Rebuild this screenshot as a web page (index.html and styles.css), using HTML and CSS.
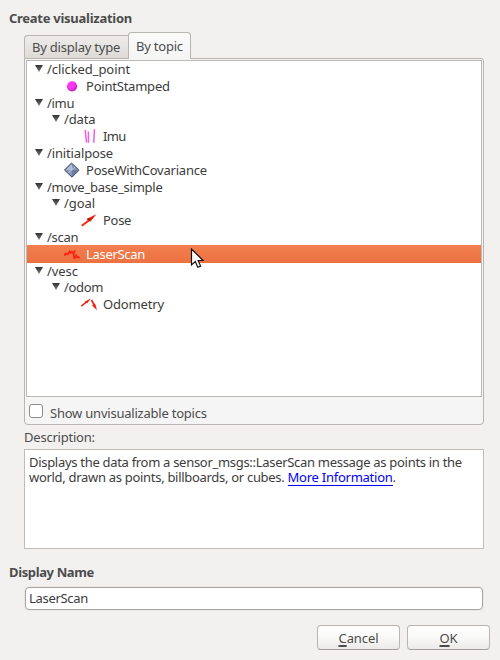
FILE: index.html
```
<!DOCTYPE html>
<html lang="en">
<head>
<meta charset="utf-8">
<title>Create visualization</title>
<link rel="stylesheet" href="styles.css">
</head>
<body>
<main class="dialog">
  <h2 class="heading">Create visualization</h2>
  <div class="tabs">
    <div class="tab">By display type</div>
    <div class="tab active">By topic</div>
  </div>
  <section class="pane">
    <div class="tree">
      <div class="row"><i class="arrow"></i><span class="s0">/clicked_point</span></div>
      <div class="row leaf d1"><svg class="icon" viewBox="0 0 16 16"><defs><radialGradient id="ball" cx=".4" cy=".38" r=".65"><stop offset="0.5" stop-color="#ff35fa"/><stop offset="1" stop-color="#b51cb2"/></radialGradient></defs><circle cx="8" cy="8.3" r="5.1" fill="url(#ball)"/></svg><span class="s2">PointStamped</span></div>
      <div class="row"><i class="arrow"></i><span class="s3">/imu</span></div>
      <div class="row d1"><i class="arrow"></i><span class="s1">/data</span></div>
      <div class="row leaf d2"><svg class="icon" viewBox="0 0 16 16"><g fill="none" stroke="#ee5ce8" stroke-width="1.5"><path d="M4.2 2l1.3 12.5M7.4 3.5v11.3M13.4 1.2l-.6 13.6"/></g></svg><span class="s5">Imu</span></div>
      <div class="row"><i class="arrow"></i><span class="s1">/initialpose</span></div>
      <div class="row leaf d1"><svg class="icon" viewBox="0 0 16 16"><path d="M7.5 1L15 8.2 8 15.2.5 8z" fill="#8796b8" stroke="#35425f"/><path d="M7.5 2L8.5 8 2 8z" fill="#b3bdd5"/><path d="M8.5 8l5.5.2L8 14z" fill="#66779e"/><path d="M4 11l7-6" stroke="#b9c3d9"/></svg><span class="s2">PoseWithCovariance</span></div>
      <div class="row"><i class="arrow"></i><span class="s2">/move_base_simple</span></div>
      <div class="row d1"><i class="arrow"></i><span class="s0">/goal</span></div>
      <div class="row leaf d2"><svg class="icon" viewBox="0 0 16 16"><path d="M.8 13.8l7-5.3" stroke="#ff2408" stroke-width="2"/><path d="M5.4 7L15.5 2.2 9.2 9.8z" fill="#ef1c05"/><path d="M6 7l3 2.6-.5-3z" fill="#8e1205"/></svg><span class="s3">Pose</span></div>
      <div class="row"><i class="arrow"></i><span class="s3">/scan</span></div>
      <div class="row leaf d1 selected"><svg class="icon" viewBox="0 0 16 16"><path d="M.5 9.8l1-2 2.5.2 1.5-2.3.8 1 1-.9 1 .8 2-1L9.6 8l.7 4 1.3-.4.6-2 1.2 1.9 2.2-.2" fill="none" stroke="#ff2415" stroke-width="1.9"/></svg><span class="s3">LaserScan</span></div>
      <div class="row"><i class="arrow"></i><span class="s0">/vesc</span></div>
      <div class="row d1"><i class="arrow"></i><span class="s3">/odom</span></div>
      <div class="row leaf d2"><svg class="icon" viewBox="0 0 16 16"><path d="M.3 10.2l5.5-4.6M10.5 4l4 7.5" stroke="#f5220c" stroke-width="1.6"/><path d="M3.8 5.8l6-3.6-3.4 5zM11 9.2l3-1.6 2 6.6z" fill="#f5220c"/></svg><span class="s1">Odometry</span></div>
    </div>
    <label class="check"><i class="box"></i><span class="s2">Show unvisualizable topics</span></label>
  </section>
  <div class="label s2">Description:</div>
  <div class="description">
    <div class="line s3">Displays the data from a sensor_msgs::LaserScan message as points in the</div>
    <div class="line"><span class="s3">world, drawn as points, billboards, or cubes. </span><a class="link">More Information</a><span>.</span></div>
  </div>
  <h2 class="heading name">Display Name</h2>
  <div class="field s3">LaserScan</div>
  <div class="buttons">
    <div class="button"><span><u>C</u>ancel</span></div>
    <div class="button"><span><u>O</u>K</span></div>
  </div>
</main>
<svg class="cursor" viewBox="0 0 14 22"><path d="M1.5 1v16l3.8-3.5 2.5 5.8 2.8-1.2-2.5-5.6h5z" fill="#fff" stroke="#111" stroke-width="1.2"/></svg>
</body>
</html>
```
FILE: styles.css
```
* { box-sizing: border-box; }
body {
  margin: 0;
  background: #f2f1f0;
  color: #3c3c3c;
  font: 13px/16px "Noto Sans", "Open Sans", sans-serif;
}
.dialog { width: 500px; height: 660px; padding: 10px 10px 0 9px; white-space: nowrap; overflow: hidden; }
.s0 { letter-spacing: -0.07px; }
.s1 { letter-spacing: -0.14px; }
.s2 { letter-spacing: -0.22px; }
.s3 { letter-spacing: -0.3px; }
.s5 { letter-spacing: -0.7px; }
.heading {
  margin: 0;
  height: 22px;
  font-size: 13px;
  line-height: 17px;
  font-weight: bold;
  letter-spacing: -0.27px;
  color: #4c4c4c;
}
.tabs { display: flex; align-items: flex-end; height: 26px; margin-left: 15px; }
.tab {
  width: 105px;
  height: 23px;
  padding-left: 7px;
  line-height: 23px;
  letter-spacing: -0.22px;
  color: #4c4c4c;
  border: 1px solid #b9b5b0;
  border-right: 0;
  border-bottom: 0;
  border-radius: 4px 0 0 0;
  background: linear-gradient(#eeedeb, #dddad6);
}
.tab.active {
  width: 63px;
  height: 27px;
  margin: 0 0 -1px -1px;
  line-height: 27px;
  border-right: 1px solid #b9b5b0;
  border-radius: 4px 4px 0 0;
  background: linear-gradient(#fafafa, #f5f5f5);
  z-index: 1;
}
.pane {
  width: 460px;
  height: 367px;
  margin-left: 15px;
  padding: 1px;
  border: 1px solid #b9b5b0;
  border-radius: 0 3px 4px 4px;
  background: #f5f5f5;
}
.tree {
  width: 456px;
  height: 337px;
  background: #fff;
  border: 1px solid #bcb9b5;
}
.row { display: flex; align-items: center; height: 16px; padding-left: 8px; }
.row.leaf { height: 18px; }
.row.d1 { padding-left: 25px; }
.row.leaf.d1 { padding-left: 37px; }
.row.leaf.d2 { padding-left: 54px; }
.row.selected { color: #fff; background: linear-gradient(#f37f50, #ec7140); }
.arrow { width: 12px; height: 12px; display: flex; }
.arrow::before {
  content: "";
  width: 8px;
  height: 7px;
  margin-top: 2px;
  background: linear-gradient(#333, #777);
  clip-path: polygon(0 0, 100% 0, 50% 100%);
}
.icon { width: 16px; height: 16px; margin-right: 6px; flex: none; }
.check { display: flex; align-items: center; height: 27px; padding: 4px 0 0 3px; color: #4c4c4c; }
.box {
  width: 14px;
  height: 14px;
  margin: -4px 7px 0 0;
  background: #fff;
  border: 1px solid #8e8b88;
  border-radius: 3px;
}
.label { height: 24px; margin-left: 15px; padding-top: 4px; color: #4c4c4c; }
.description {
  width: 460px;
  height: 100px;
  margin-left: 15px;
  padding: 4px;
  background: #fff;
  border: 1px solid #c0bdb9;
}
.line { display: flex; height: 15px; white-space: pre; }
.link { height: 17px; color: #00f; letter-spacing: -0.25px; border-bottom: 1px solid #00f; }
.heading.name { height: 38px; padding-top: 15px; letter-spacing: -0.37px; }
.field {
  width: 458px;
  height: 23px;
  margin-left: 16px;
  padding-left: 3px;
  line-height: 21px;
  background: #fff;
  border: 1px solid #a9a5a0;
  border-radius: 4px;
  box-shadow: 0 0 0 1px #eae8e6;
}
.buttons { display: flex; justify-content: flex-end; gap: 7px; margin-top: 15px; }
.button {
  width: 83px;
  height: 25px;
  line-height: 25px;
  text-align: center;
  letter-spacing: -0.08px;
  color: #4c4c4c;
  border: 1px solid #b9b5b0;
  border-bottom-color: #a19d99;
  border-radius: 4px;
  background: linear-gradient(#fff, #f9f9f8 50%, #ebeae8);
}
.button u { text-decoration-thickness: 2px; text-underline-offset: 2px; }
.cursor { position: absolute; left: 190px; top: 248px; width: 14px; height: 22px; }
```
